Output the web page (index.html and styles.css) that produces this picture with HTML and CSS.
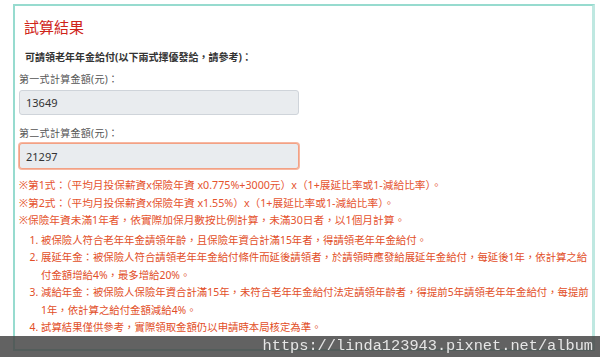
FILE: index.html
```html
<!DOCTYPE html>
<html lang="zh-Hant">
<head>
<meta charset="UTF-8">
<meta name="viewport" content="width=device-width, initial-scale=1.0">
<title>試算結果</title>
<link rel="stylesheet" href="styles.css">
</head>
<body>

<div class="result-card">
    <h3 class="result-title">試算結果</h3>
    <p class="result-sub">可請領老年年金給付(以下兩式擇優發給，請參考)：</p>

    <label class="field-label" for="amount-1">第一式計算金額(元)：</label>
    <input type="text" id="amount-1" class="amount-box" value="13649" readonly>

    <label class="field-label" for="amount-2">第二式計算金額(元)：</label>
    <input type="text" id="amount-2" class="amount-box amount-focus" value="21297" readonly>

    <div class="notes">
        <p>※第1式：（平均月投保薪資x保險年資 x0.775%+3000元）x（1+展延比率或1-減給比率）。</p>
        <p>※第2式：（平均月投保薪資x保險年資 x1.55%）x（1+展延比率或1-減給比率）。</p>
        <p>※保險年資未滿1年者，依實際加保月數按比例計算，未滿30日者，以1個月計算。</p>
    </div>

    <ol class="rules">
        <li>被保險人符合老年年金請領年齡，且保險年資合計滿15年者，得請領老年年金給付。</li>
        <li>展延年金：被保險人符合請領老年年金給付條件而延後請領者，於請領時應發給展延年金給付，每延後1年，依計算之給付金額增給4%，最多增給20%。</li>
        <li>減給年金：被保險人保險年資合計滿15年，未符合老年年金給付法定請領年齡者，得提前5年請領老年年金給付，每提前1年，依計算之給付金額減給4%。</li>
        <li>試算結果僅供參考，實際領取金額仍以申請時本局核定為準。</li>
    </ol>
</div>

<div class="watermark">https://linda123943.pixnet.net/album</div>

</body>
</html>
```

FILE: styles.css
```css
body {
    font-family: "Noto Sans", "Noto Sans CJK TC", sans-serif;
    background: #fff;
    color: #333;
    margin: 0;
    padding: 4px 5px 0 13px;
}

.result-card {
    border: 2px solid #97dbcf;
    border-right: 3px solid #bfe8e1;
    padding: 0 2px 12px 4px;
}

.result-title {
    font-size: 15px;
    line-height: 20px;
    font-weight: normal;
    color: #cf2419;
    margin: 11px 0 0 5px;
}

.result-sub {
    font-size: 10px;
    line-height: 16px;
    font-weight: bold;
    color: #333;
    margin: 12px 0 0 6px;
}

.field-label {
    display: block;
    font-size: 10px;
    line-height: 16px;
    letter-spacing: 0.3px;
    color: #555;
    margin-top: 6px;
}

.amount-box {
    display: block;
    box-sizing: border-box;
    width: 280px;
    height: 25px;
    margin-top: 3px;
    padding: 0 6px;
    font-family: "Noto Sans", sans-serif;
    font-size: 11px;
    color: #333;
    background: #e9ecef;
    border: 1px solid #cfd4da;
    border-radius: 3px;
    outline: none;
}

.amount-focus {
    height: 26px;
    margin-top: 2px;
    border: 1px solid #f3a184;
    box-shadow: 0 0 0 1px #f7b8a2;
}

.amount-box + .field-label {
    margin-top: 10px;
}

.notes {
    margin-top: 8px;
    color: #e5532e;
    font-size: 10.7px;
    line-height: 17.5px;
}

.notes p {
    margin: 0;
}

.rules {
    margin: 2px 0 0 0;
    padding-left: 22px;
    color: #e24e27;
    font-size: 10.4px;
    line-height: 17.5px;
}

.watermark {
    position: fixed;
    left: 0;
    right: 0;
    bottom: 0;
    height: 21px;
    background: rgba(70, 70, 70, 0.85);
    color: #e6e6e6;
    font-family: "Liberation Mono", monospace;
    font-size: 15.3px;
    line-height: 21px;
    text-align: right;
    padding-right: 7px;
}
```
